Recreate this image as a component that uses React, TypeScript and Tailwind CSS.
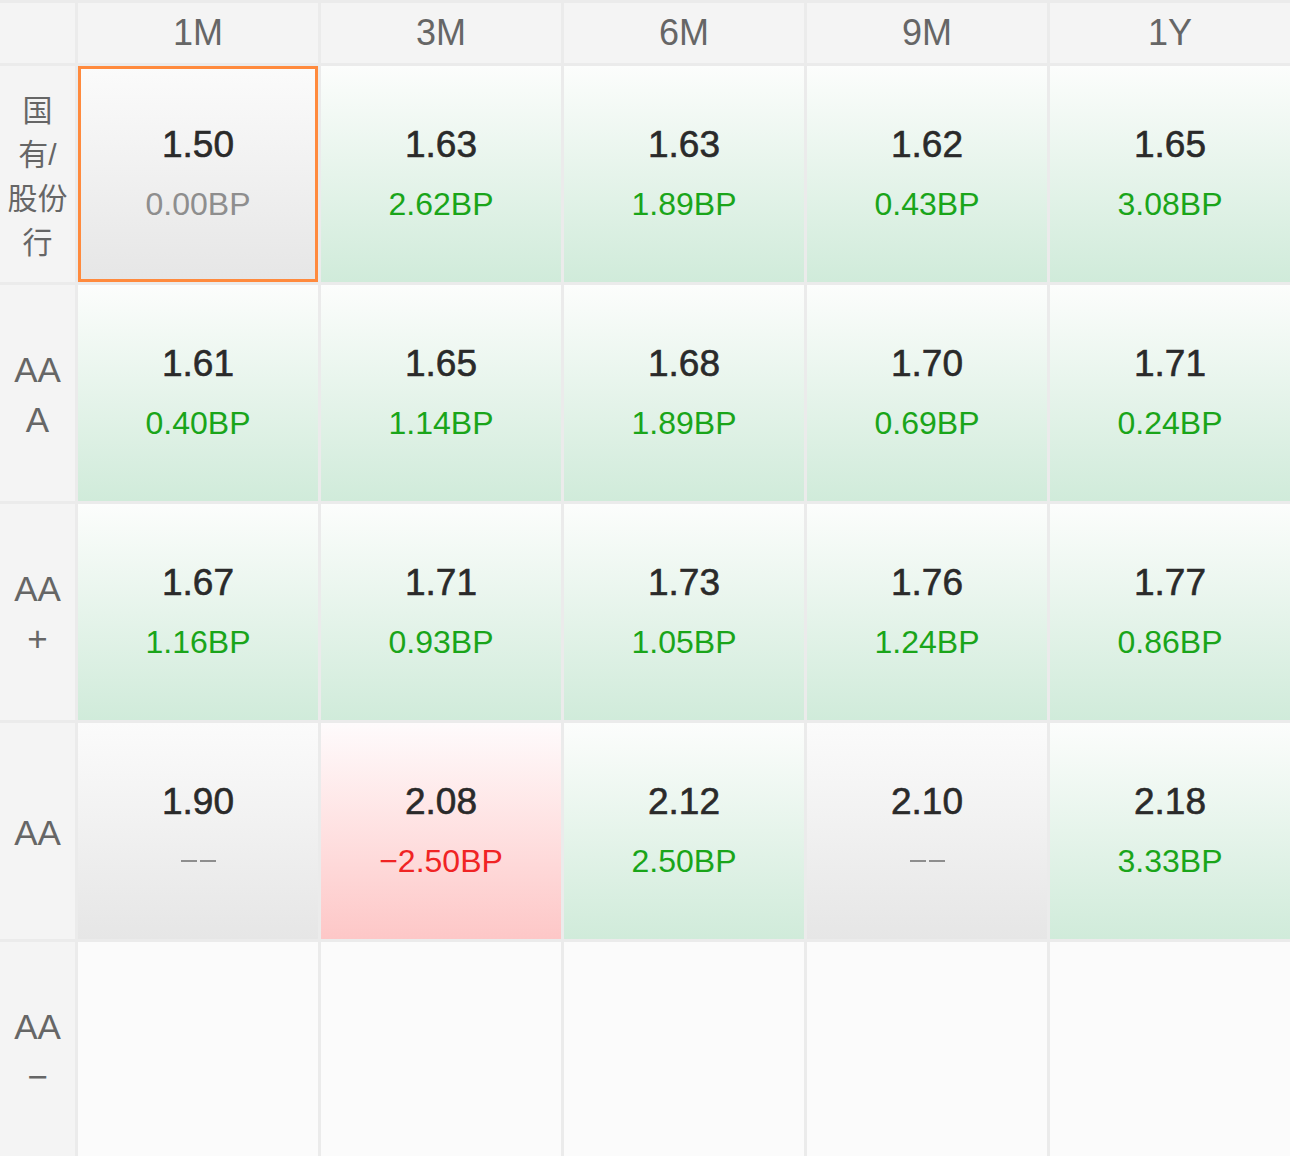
import React from 'react';

type Tone = 'green' | 'gray' | 'red' | 'empty';

interface Cell {
    value?: string;
    bp?: string;
    tone: Tone;
    active?: boolean;
}

const font = {fontFamily: '"Liberation Sans", "Noto Sans CJK SC", sans-serif'};

const columns = ['1M', '3M', '6M', '9M', '1Y'];

const rows: {label: string[]; cjk?: boolean; cells: Cell[]}[] = [
    {
        label: ['国', '有/', '股份', '行'],
        cjk: true,
        cells: [
            {value: '1.50', bp: '0.00BP', tone: 'gray', active: true},
            {value: '1.63', bp: '2.62BP', tone: 'green'},
            {value: '1.63', bp: '1.89BP', tone: 'green'},
            {value: '1.62', bp: '0.43BP', tone: 'green'},
            {value: '1.65', bp: '3.08BP', tone: 'green'},
        ],
    },
    {
        label: ['AA', 'A'],
        cells: [
            {value: '1.61', bp: '0.40BP', tone: 'green'},
            {value: '1.65', bp: '1.14BP', tone: 'green'},
            {value: '1.68', bp: '1.89BP', tone: 'green'},
            {value: '1.70', bp: '0.69BP', tone: 'green'},
            {value: '1.71', bp: '0.24BP', tone: 'green'},
        ],
    },
    {
        label: ['AA', '+'],
        cells: [
            {value: '1.67', bp: '1.16BP', tone: 'green'},
            {value: '1.71', bp: '0.93BP', tone: 'green'},
            {value: '1.73', bp: '1.05BP', tone: 'green'},
            {value: '1.76', bp: '1.24BP', tone: 'green'},
            {value: '1.77', bp: '0.86BP', tone: 'green'},
        ],
    },
    {
        label: ['AA'],
        cells: [
            {value: '1.90', bp: '--', tone: 'gray'},
            {value: '2.08', bp: '−2.50BP', tone: 'red'},
            {value: '2.12', bp: '2.50BP', tone: 'green'},
            {value: '2.10', bp: '--', tone: 'gray'},
            {value: '2.18', bp: '3.33BP', tone: 'green'},
        ],
    },
    {
        label: ['AA', '−'],
        cells: [
            {tone: 'empty'},
            {tone: 'empty'},
            {tone: 'empty'},
            {tone: 'empty'},
            {tone: 'empty'},
        ],
    },
];

const toneBg: Record<Tone, string> = {
    green: 'bg-gradient-to-b from-[#fcfdfc] to-[#d0ebda]',
    gray: 'bg-gradient-to-b from-[#fbfbfb] to-[#e6e6e6]',
    red: 'bg-gradient-to-b from-[#fefbfc] to-[#fdc7c7]',
    empty: 'bg-[#fbfbfb]',
};

const toneText: Record<Tone, string> = {
    green: 'text-[#1aa51a]',
    gray: 'text-[#8e8e8e]',
    red: 'text-[#f02424]',
    empty: '',
};

const RateCell = ({cell}: {cell: Cell}) => {
    return (
        <div className={`relative h-[216px] flex flex-col items-center justify-center ${toneBg[cell.tone]}`}>
            {cell.value && (
                <>
                    <div className="text-[37px] leading-[44px] text-[#2a2a2a] [-webkit-text-stroke:0.6px_#2a2a2a]">
                        {cell.value}
                    </div>
                    {cell.bp === '--' ? (
                        <div className="h-[44px] mt-[15px] flex items-center gap-[3px]">
                            <span className="block w-[16px] h-[2px] bg-[#8e8e8e]" />
                            <span className="block w-[16px] h-[2px] bg-[#8e8e8e]" />
                        </div>
                    ) : (
                        <div className={`text-[32px] leading-[44px] mt-[15px] ${toneText[cell.tone]}`}>
                            {cell.bp}
                        </div>
                    )}
                </>
            )}
            {cell.active && (
                <div className="absolute inset-0 border-[3px] border-[#ff8a3d] pointer-events-none" />
            )}
        </div>
    );
};

export default function App() {
    return (
        <div className="w-[1290px] h-[1156px] overflow-hidden bg-[#ebebeb] pt-[3px]" style={font}>
            <div className="grid grid-cols-[75px_repeat(5,240px)] gap-x-[3px] gap-y-[3px]">
                <div className="h-[60px] bg-[#f4f4f4]" />
                {columns.map((c) => (
                    <div key={c} className="h-[60px] bg-[#f4f4f4] flex items-center justify-center text-[36px] text-[#666]">
                        {c}
                    </div>
                ))}
                {rows.map((row, i) => (
                    <React.Fragment key={i}>
                        <div
                            className={`h-[216px] bg-[#f4f4f4] flex flex-col items-center justify-center text-[#666] ${row.cjk ? 'pt-[6px]' : 'pt-[3px]'}`}
                        >
                            {row.label.map((l, j) => (
                                <div
                                    key={j}
                                    className={row.cjk ? 'text-[30px] leading-[44px]' : 'text-[35px] leading-[50px]'}
                                >
                                    {l}
                                </div>
                            ))}
                        </div>
                        {row.cells.map((cell, j) => (
                            <RateCell key={j} cell={cell} />
                        ))}
                    </React.Fragment>
                ))}
            </div>
        </div>
    );
}
